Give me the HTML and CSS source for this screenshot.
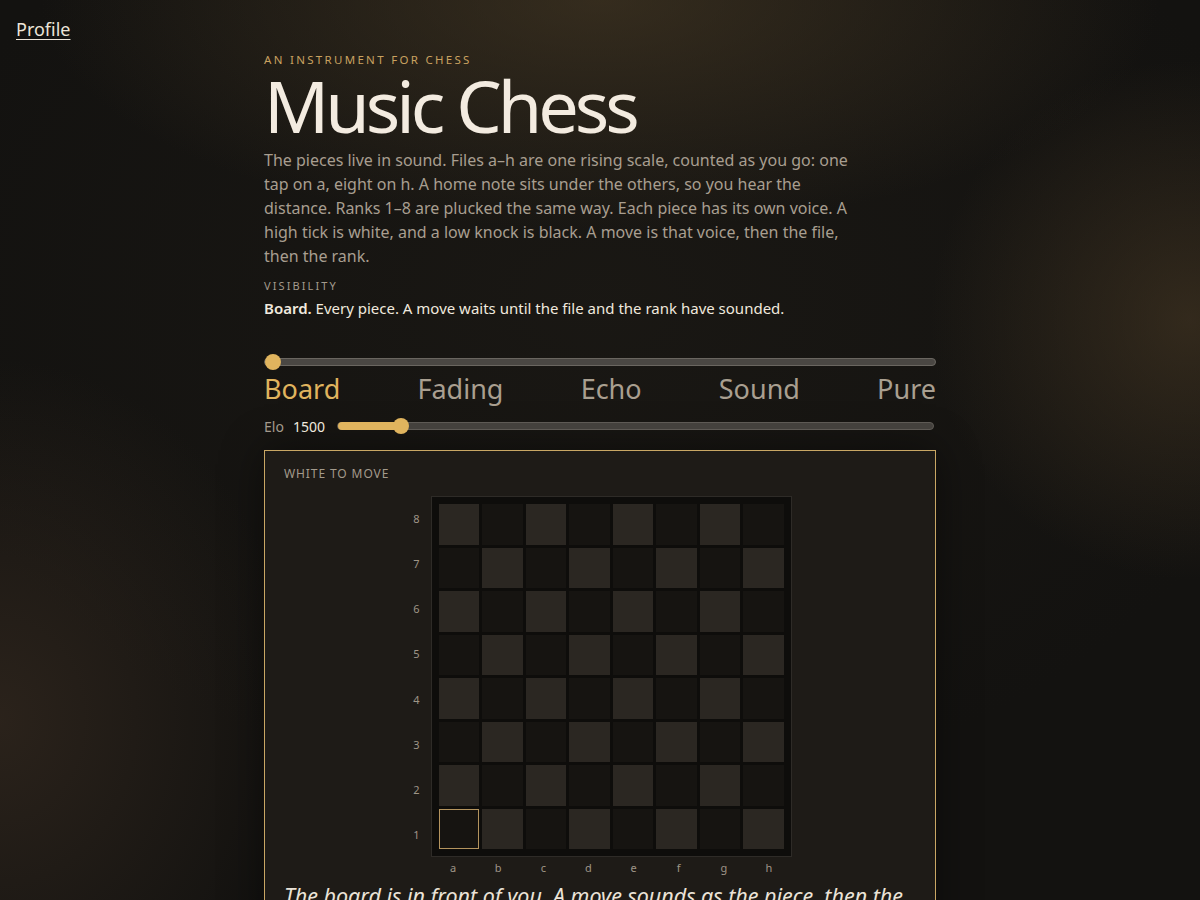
FILE: index.html
```html
<!DOCTYPE html>
<html lang="en">
<head>
<meta charset="utf-8">
<title>Music Chess</title>
<link rel="stylesheet" href="styles.css">
</head>
<body>
<header class="topbar">
  <a class="profile-link" href="#">Profile</a>
</header>
<main class="page">
  <p class="kicker">AN INSTRUMENT FOR CHESS</p>
  <h1 class="title">Music Chess</h1>
  <p class="intro">The pieces live in sound. Files a–h are one rising scale, counted as you go: one tap on a, eight on h. A home note sits under the others, so you hear the distance. Ranks 1–8 are plucked the same way. Each piece has its own voice. A high tick is white, and a low knock is black. A move is that voice, then the file, then the rank.</p>
  <p class="label">VISIBILITY</p>
  <p class="vis-desc"><strong>Board.</strong> Every piece. A move waits until the file and the rank have sounded.</p>

  <div class="mode-slider">
    <div class="track"><span class="thumb"></span></div>
    <div class="mode-labels">
      <span class="mode active">Board</span>
      <span class="mode">Fading</span>
      <span class="mode">Echo</span>
      <span class="mode">Sound</span>
      <span class="mode">Pure</span>
    </div>
  </div>

  <div class="elo-row">
    <span class="elo-label">Elo</span>
    <span class="elo-value">1500</span>
    <div class="elo-track">
      <span class="elo-fill" style="width: 10.6%"></span>
      <span class="elo-thumb" style="left: 10.6%"></span>
    </div>
  </div>

  <section class="panel">
    <p class="panel-label">WHITE TO MOVE</p>
    <div class="board-wrap">
      <div class="ranks">
        <span>8</span><span>7</span><span>6</span><span>5</span><span>4</span><span>3</span><span>2</span><span>1</span>
      </div>
      <div class="board" id="board"></div>
      <div class="corner"></div>
      <div class="files">
        <span>a</span><span>b</span><span>c</span><span>d</span><span>e</span><span>f</span><span>g</span><span>h</span>
      </div>
    </div>
    <p class="narration">The board is in front of you. A move sounds as the piece, then the file, then the rank.</p>
  </section>
</main>
<script src="script.js"></script>
</body>
</html>
```

FILE: script.js
```js
(function () {
  var board = document.getElementById('board');
  for (var r = 8; r >= 1; r--) {
    for (var f = 0; f < 8; f++) {
      var cell = document.createElement('div');
      var light = (r + f) % 2 === 0;
      cell.className = 'sq ' + (light ? 'light' : 'dark');
      if (r === 1 && f === 0) cell.className += ' selected';
      board.appendChild(cell);
    }
  }
})();
```

FILE: styles.css
```css
* { box-sizing: border-box; }
html, body { margin: 0; padding: 0; }
body {
  min-height: 100vh;
  font-family: "Noto Sans", "Open Sans", sans-serif;
  color: #ece4d8;
  background-color: #131210;
  background-image:
    radial-gradient(ellipse 560px 230px at 600px 0px, rgba(74, 60, 38, 0.6), rgba(74, 60, 38, 0) 100%),
    radial-gradient(ellipse 260px 260px at 1190px 320px, rgba(76, 60, 38, 0.55), rgba(76, 60, 38, 0) 100%),
    radial-gradient(ellipse 300px 360px at 0px 720px, rgba(62, 48, 36, 0.55), rgba(62, 48, 36, 0) 100%),
    radial-gradient(ellipse 700px 500px at 600px 300px, rgba(30, 27, 22, 0.6), rgba(30, 27, 22, 0) 100%);
  background-repeat: no-repeat;
}
.topbar { padding: 16px 16px 0; height: 48px; }
.profile-link {
  color: #ece4d8;
  font-size: 18px;
  line-height: 26px;
  text-decoration: underline;
  text-underline-offset: 3px;
  text-decoration-thickness: 1px;
}
.page { width: 672px; margin: 0 auto; padding-top: 4px; }
.kicker {
  margin: 0;
  font-size: 11.5px;
  line-height: 16px;
  letter-spacing: 2.3px;
  color: #c9a260;
}
.title {
  margin: 1px 0 0;
  font-size: 72px;
  line-height: 72px;
  font-weight: 400;
  color: #f3ebe0;
  letter-spacing: -4px;
}
.intro {
  margin: 7px 0 0;
  max-width: 600px;
  font-size: 16px;
  line-height: 24px;
  color: #a89e90;
}
.label {
  margin: 10px 0 0;
  font-size: 11px;
  line-height: 16px;
  letter-spacing: 2.1px;
  color: #a39a8c;
}
.vis-desc {
  margin: 3px 0 0;
  font-size: 15px;
  line-height: 22px;
  color: #f0e9de;
}
.vis-desc strong { font-weight: 600; }

.mode-slider { margin-top: 39px; }
.track {
  position: relative;
  height: 8px;
  border-radius: 4px;
  background: #4a4743;
  border: 1px solid #6a6660;
}
.thumb {
  position: absolute;
  left: 0;
  top: 50%;
  width: 16px;
  height: 16px;
  margin-top: -8px;
  border-radius: 50%;
  background: #e0b45e;
}
.mode-labels {
  display: flex;
  justify-content: space-between;
  margin-top: 4px;
}
.mode {
  font-size: 27px;
  line-height: 38px;
  color: #a99f90;
}
.mode.active { color: #e0b45e; }

.elo-row {
  display: flex;
  align-items: center;
  gap: 9px;
  margin-top: 7px;
  height: 22px;
}
.elo-label { font-size: 14px; color: #a39a8c; }
.elo-value { font-size: 14px; color: #f0e9de; margin-right: 3px; }
.elo-track {
  position: relative;
  flex: 1;
  height: 8px;
  border-radius: 4px;
  background: #44413d;
  border: 1px solid #5e5a55;
  margin-right: 2px;
}
.elo-fill {
  position: absolute;
  left: 0; top: -1px; bottom: -1px;
  border-radius: 4px;
  background: #e0b45e;
}
.elo-thumb {
  position: absolute;
  top: 50%;
  width: 16px;
  height: 16px;
  margin: -8px 0 0 -8px;
  border-radius: 50%;
  background: #e0b45e;
}

.panel {
  margin-top: 13px;
  border: 1px solid #c9a764;
  background: #1e1b17;
  padding: 15px 19px 20px;
  box-shadow: 0 0 40px rgba(0, 0, 0, 0.45);
}
.panel-label {
  margin: 0;
  font-size: 12px;
  line-height: 16px;
  letter-spacing: 0.9px;
  color: #a39a8c;
}
.board-wrap {
  margin: 14px auto 0;
  display: grid;
  grid-template-columns: 16px 361px;
  grid-template-rows: 361px auto;
  column-gap: 6px;
  width: 383px;
}
.ranks {
  display: grid;
  grid-template-rows: repeat(8, 1fr);
}
.ranks span, .files span {
  display: flex;
  align-items: center;
  justify-content: center;
  font-size: 11px;
  color: #9e9587;
}
.board {
  display: grid;
  grid-template-columns: repeat(8, 1fr);
  grid-template-rows: repeat(8, 1fr);
  gap: 3px;
  padding: 7px;
  background: #0e0d0b;
  border: 1px solid #2e2b27;
}
.sq.light { background: #2b2722; }
.sq.dark { background: #161411; }
.sq.selected { background: #161411; border: 1px solid #b4945e; }
.files {
  display: grid;
  grid-template-columns: repeat(8, 1fr);
  height: 20px;
}
.narration {
  margin: 4px 0 0;
  font-size: 21.5px;
  line-height: 30px;
  font-style: italic;
  color: #ebe3d7;
}
```
